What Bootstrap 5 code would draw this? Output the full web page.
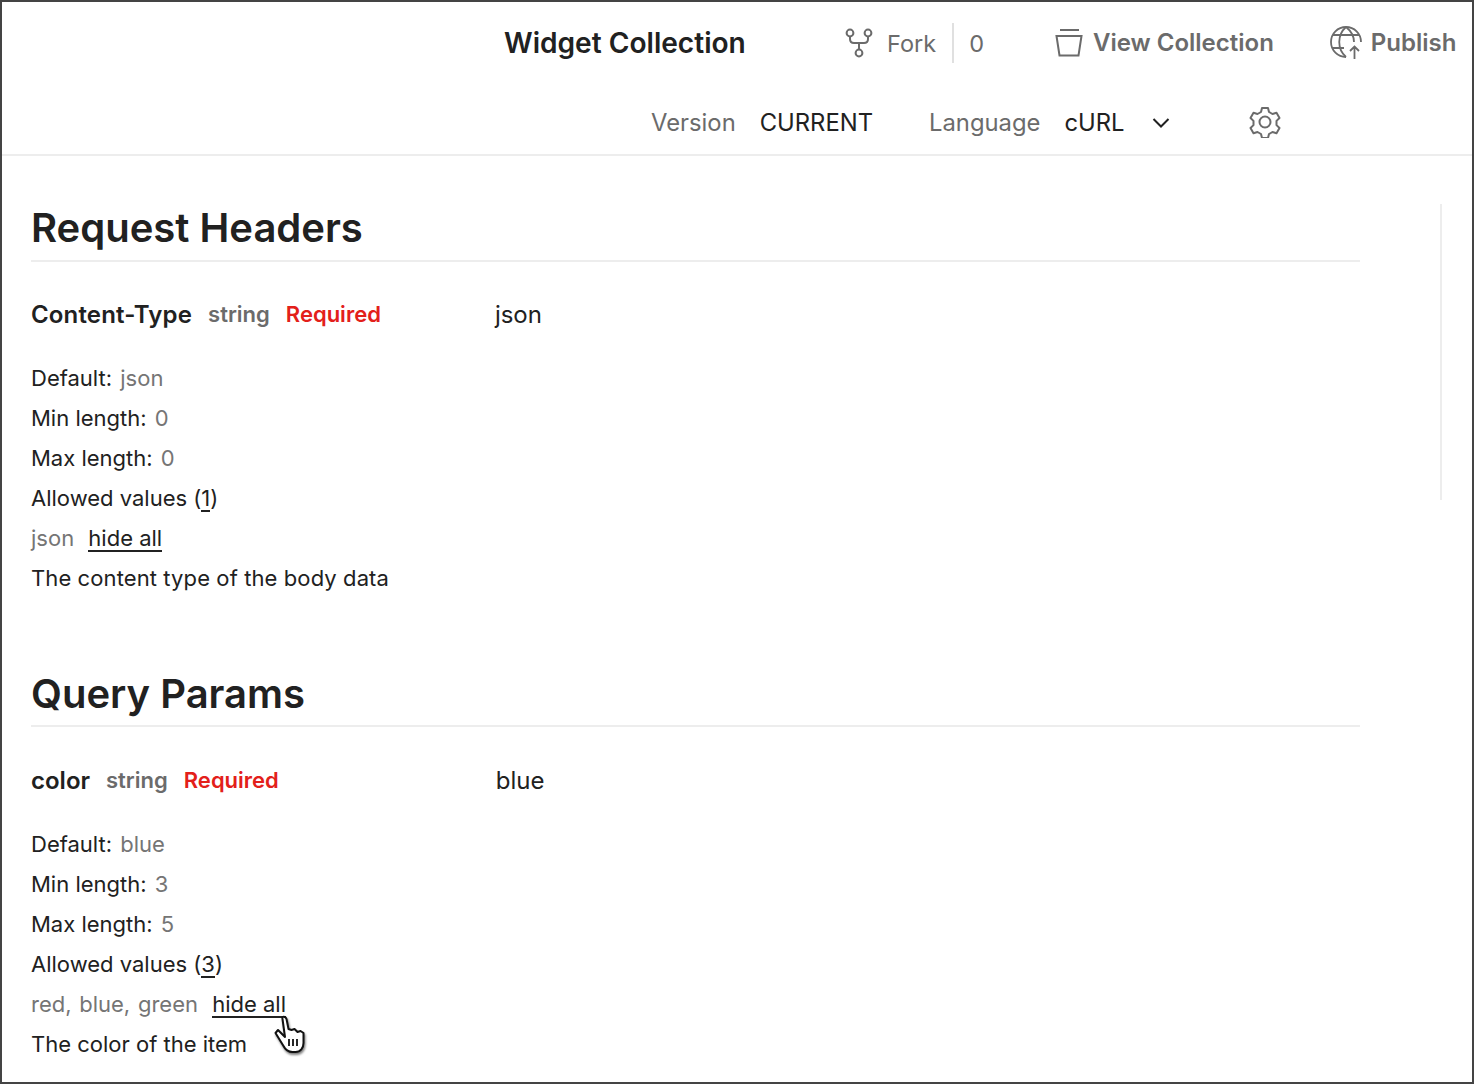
<!DOCTYPE html>
<html lang="en"><head><meta charset="utf-8"><title>Widget Collection</title>
<link href="https://cdn.jsdelivr.net/npm/bootstrap@5.3.0/dist/css/bootstrap.min.css" rel="stylesheet">
<style>
html,body{height:100%;overflow:hidden}
body{font-family:Inter,"Liberation Sans",sans-serif;color:#212121;font-size:22px;background:#fff}
.frame{height:1084px;border:2px solid #444;overflow:hidden;position:relative}
.top{height:154px;border-bottom:2px solid #ededed;padding-left:502px}
.rowa{height:82px}
.rowb{height:78px;padding-left:147px}
.ttl{font-size:28.100px;font-weight:600;width:341px;color:#212121}
.act{font-size:24px;font-weight:600;color:#6b6b6b}
.fk{font-size:23.500px;color:#6b6b6b;position:relative;top:1px}
.fk1{margin-left:14px}
.vsep{width:2px;height:40px;background:#e0e0e0;margin:0 15px 0 16px}
.ic1{margin-left:71px}.ic2{margin-left:56px}
.gp1{margin-left:10px}.gp2{margin-left:7px}
.lab{font-size:23.800px;color:#6b6b6b}
.val{font-size:23.800px;color:#212121;margin-left:24px}
.lg{margin-left:56px}
.chev{margin-left:28px}.gear{margin-left:79px;margin-top:-2px}
.main{padding:46px 0 0 29px;width:1358px;position:relative}
.sect{font-size:40px;font-weight:600;line-height:52px;border-bottom:2px solid #ededed;padding-bottom:6px;margin:0;color:#212121}
.sect2{margin-top:70px;padding-bottom:5px}
.hrow{margin-top:35px;height:40px}
.sect2 + .hrow{margin-top:36px}
.nm{font-size:24px;font-weight:600;margin-right:16px}
.nmw{letter-spacing:.16px}
.ty{font-size:22px;font-weight:600;color:#6b6b6b;margin-right:16px;position:relative;top:-1px}
.rq{font-size:22px;font-weight:600;color:#e3201a;position:relative;top:-1px}
.ex{font-size:24px}
.ex1{margin-left:114px}.ex2{margin-left:217px}
.ln{height:40px;line-height:40px;font-size:22px}
.ln i{font-style:normal;color:#757575;word-spacing:1.500px}
.ln i.vl{margin-left:2px}
.wd{letter-spacing:.1px}
.det{margin-top:21px}
.und{color:#212121;text-decoration:none;border-bottom:2px solid #212121;line-height:1.1;display:inline-block}
.sb{position:absolute;left:1438px;top:202px;width:2px;height:296px;background:#ededed}
.ptr{position:absolute;left:272px;top:1013px;filter:drop-shadow(1px 2px 1px rgba(0,0,0,.5))}
</style></head><body>
<div class="frame">
<div class="top">
<div class="rowa d-flex align-items-center">
<div class="ttl">Widget Collection</div>
<svg width="28" height="32" viewBox="0 0 28 32" fill="none" stroke="#6b6b6b" stroke-width="2"><circle cx="5" cy="6" r="3.400"/><circle cx="23" cy="6" r="3.400"/><circle cx="14" cy="26" r="3.400"/><path d="M5 9.500V12q0 4 4 4h10q4 0 4-4V9.500M14 16v6.500"/></svg>
<span class="fk fk1">Fork</span><span class="vsep"></span><span class="fk">0</span>
<svg class="ic1" width="28" height="30" viewBox="0 0 28 30" fill="none" stroke="#6b6b6b" stroke-width="2"><path d="M5 2h19"/><path d="M1.500 8h25l-3 19.500h-19z"/></svg>
<span class="act gp1">View Collection</span>
<svg class="ic2" width="34" height="34" viewBox="0 0 34 34" fill="none" stroke="#6b6b6b" stroke-width="1.800"><path d="M16 31a15 15 0 1 1 15-15"/><path d="M16 1c-9 8-9 22 0 30M16 1c5 4 8 9 8 15M3 9h26M2 22h12"/><path d="M24.500 33V21M20 25l4.500-4.500L29 25"/></svg>
<span class="act gp2">Publish</span>
</div>
<div class="rowb d-flex align-items-center">
<span class="lab">Version</span><span class="val">CURRENT</span>
<span class="lab lg">Language</span><span class="val">cURL</span>
<svg class="chev" width="18" height="12" viewBox="0 0 18 12" fill="none" stroke="#212121" stroke-width="2"><path d="M1.500 2l7.500 7.500L16.500 2"/></svg>
<svg class="gear" width="32" height="32" viewBox="0 0 32 32" fill="none" stroke="#6b6b6b" stroke-width="2"><circle cx="16" cy="16" r="5.500"/><path d="M13 2h6l1 4 3.500 2 4-1.200 3 5.200-3 2.900v4.200l3 2.900-3 5.200-4-1.200-3.500 2-1 4h-6l-1-4-3.500-2-4 1.200-3-5.200 3-2.900v-4.200l-3-2.900 3-5.200 4 1.200L12 6z" stroke-linejoin="round"/></svg>
</div>
</div>
<div class="main">
<h2 class="sect">Request Headers</h2>
<div class="hrow d-flex align-items-baseline"><span class="nm nmw">Content-Type</span><span class="ty">string</span><span class="rq">Required</span><span class="ex ex1">json</span></div>
<div class="det">
<div class="ln">Default: <i class="vl">json</i></div>
<div class="ln">Min length: <i class="vl">0</i></div>
<div class="ln">Max length: <i class="vl">0</i></div>
<div class="ln">Allowed values (<span class="und">1</span>)</div>
<div class="ln"><i>json</i> <a class="und ms-2" href="#">hide all</a></div>
<div class="ln wd">The content type of the body data</div>
</div>
<h2 class="sect sect2">Query Params</h2>
<div class="hrow d-flex align-items-baseline"><span class="nm">color</span><span class="ty">string</span><span class="rq">Required</span><span class="ex ex2">blue</span></div>
<div class="det">
<div class="ln">Default: <i class="vl">blue</i></div>
<div class="ln">Min length: <i class="vl">3</i></div>
<div class="ln">Max length: <i class="vl">5</i></div>
<div class="ln">Allowed values (<span class="und">3</span>)</div>
<div class="ln"><i>red, blue, green</i> <a class="und ms-2" href="#">hide all</a></div>
<div class="ln">The color of the item</div>
</div>
</div>
<div class="sb"></div>
<svg class="ptr" width="34" height="40" viewBox="0 0 34 40"><path d="M11 22L4 15l-2.500 3 8 13c2 4 5 6 9 6h3c5 0 8-4 8-9v-10l-3-2-3 1-3-3-3 1-3-1-2-10c-1-3-5-3-4 0z" fill="#fff" stroke="#111" stroke-width="2" stroke-linejoin="round"/><path d="M15 24v7M19 24v7M23 24v7" stroke="#111" stroke-width="1.800"/></svg>
</div>
<script src="https://cdn.jsdelivr.net/npm/bootstrap@5.3.0/dist/js/bootstrap.bundle.min.js"></script>
</body></html>
